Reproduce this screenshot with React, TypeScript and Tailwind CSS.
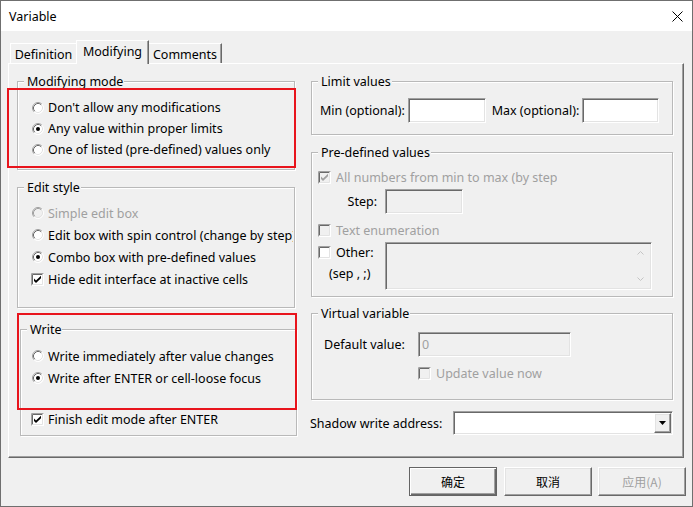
import React from "react";

const sunken =
  "border border-t-[#a0a0a0] border-l-[#a0a0a0] border-r-white border-b-white shadow-[inset_1px_1px_0_#696969,inset_-1px_-1px_0_#e3e3e3]";
const raised =
  "border border-t-white border-l-white border-r-[#696969] border-b-[#696969] shadow-[inset_-1px_-1px_0_#a0a0a0,inset_1px_1px_0_#e3e3e3]";

function RadioIcon({ checked, disabled }: { checked?: boolean; disabled?: boolean }) {
  return (
    <svg width="12" height="12" viewBox="0 0 12 12" className="shrink-0">
      <circle cx="6" cy="6" r="5.5" fill={disabled ? "#f0f0f0" : "#fff"} />
      <path d="M2.11 9.89 A5.5 5.5 0 0 1 9.89 2.11" fill="none" stroke="#a0a0a0" />
      <path d="M9.89 2.11 A5.5 5.5 0 0 1 2.11 9.89" fill="none" stroke="#fff" />
      <path d="M2.82 9.18 A4.5 4.5 0 0 1 9.18 2.82" fill="none" stroke={disabled ? "#a0a0a0" : "#696969"} />
      <path d="M9.18 2.82 A4.5 4.5 0 0 1 2.82 9.18" fill="none" stroke="#e3e3e3" />
      {checked && <circle cx="6" cy="6" r="2" fill={disabled ? "#a0a0a0" : "#000"} />}
    </svg>
  );
}

function CheckIcon({ checked, disabled }: { checked?: boolean; disabled?: boolean }) {
  return (
    <svg width="13" height="13" viewBox="0 0 13 13" className="shrink-0">
      <rect x="0" y="0" width="13" height="13" fill="#fff" />
      <rect x="2" y="2" width="9" height="9" fill={disabled ? "#f0f0f0" : "#fff"} />
      <path d="M0.5 12.5 V0.5 H12.5" fill="none" stroke="#a0a0a0" />
      <path d="M1.5 11.5 V1.5 H11.5" fill="none" stroke="#696969" />
      <path d="M1.5 11.5 H11.5 V1.5" fill="none" stroke="#e3e3e3" />
      {checked && (
        <path d="M3 5.5 L5 7.5 L10 2.8 L10 5.2 L5 10 L3 8 Z" fill={disabled ? "#a0a0a0" : "#000"} />
      )}
    </svg>
  );
}

function RadioRow({ label, checked, disabled, className = "" }: { label: string; checked?: boolean; disabled?: boolean; className?: string }) {
  return (
    <div className={"flex items-center whitespace-nowrap " + className}>
      <RadioIcon checked={checked} disabled={disabled} />
      <span className={"ml-[4px] " + (disabled ? "text-[#a0a0a0]" : "")}>{label}</span>
    </div>
  );
}

function CheckRow({ label, checked, disabled, className = "", gap = "ml-[4px]" }: { label: string; checked?: boolean; disabled?: boolean; className?: string; gap?: string }) {
  return (
    <div className={"flex items-center whitespace-nowrap " + className}>
      <CheckIcon checked={checked} disabled={disabled} />
      <span className={gap + " " + (disabled ? "text-[#a0a0a0]" : "")}>{label}</span>
    </div>
  );
}

function Group({ title, className = "", children }: { title: string; className?: string; children: React.ReactNode }) {
  return (
    <fieldset className={"border border-[#b9b9b9] shadow-[1px_1px_0_#fff,inset_1px_1px_0_#fff] " + className}>
      <legend className="ml-[6px] pl-[3px] pr-[1px] leading-[17px] bg-[#f0f0f0]">{title}</legend>
      {children}
    </fieldset>
  );
}

export default function App() {
  return (
    <div className="w-[693px] h-[507px] border border-[#6f6f6f] bg-[#f0f0f0] flex flex-col overflow-hidden text-[12.5px] leading-[17px] text-black font-['Noto_Sans',sans-serif]">
      {/* title bar */}
      <div className="h-[30px] shrink-0 bg-white flex items-center justify-between pl-[8px] pr-[9px]">
        <span>Variable</span>
        <svg width="11" height="11" viewBox="0 0 11 11">
          <path d="M0.5 0.5 L10.5 10.5 M10.5 0.5 L0.5 10.5" stroke="#000" strokeWidth="1" />
        </svg>
      </div>

      <div className="flex-1 flex flex-col pt-[9px] pl-[7px] pr-[8px] pb-[10px]">
        {/* tabs */}
        <div className="flex items-end h-[23px] pl-[2px] shrink-0">
          <div className="w-[66px] h-[20px] pt-[2px] text-center border-t border-l border-t-white border-l-white">
            Definition
          </div>
          <div className="relative z-10 w-[73px] h-[24px] -mb-[1px] pt-[2px] text-center bg-[#f0f0f0] border-t border-l border-r border-t-white border-l-white border-r-[#696969] shadow-[inset_-1px_0_0_#a0a0a0]">
            Modifying
          </div>
          <div className="w-[73px] h-[20px] pt-[2px] text-center border-t border-r border-t-white border-r-[#696969] shadow-[inset_-1px_0_0_#a0a0a0]">
            Comments
          </div>
        </div>

        {/* panel */}
        <div className="relative h-[395px] shrink-0 flex pl-[8px] pt-[9px] border border-t-white border-l-white border-r-[#696969] border-b-[#696969] shadow-[inset_-1px_-1px_0_#a0a0a0]">
          {/* left column */}
          <div className="w-[280px] flex flex-col">
            <Group title="Modifying mode" className="w-[278px]">
              <div className="pt-[7px] pb-[9px] pl-[14px]">
                <RadioRow className="h-[21px]" label="Don't allow any modifications" />
                <RadioRow className="h-[21px]" label="Any value within proper limits" checked />
                <RadioRow className="h-[21px]" label="One of listed (pre-defined) values only" />
              </div>
            </Group>

            <Group title="Edit style" className="w-[278px] mt-[9px]">
              <div className="pt-[6px] pb-[17px] pl-[14px]">
                <RadioRow className="h-[22px]" label="Simple edit box" disabled />
                <div className="flex items-center h-[22px] whitespace-nowrap">
                  <RadioIcon />
                  <span className="ml-[4px] w-[245px] overflow-hidden">Edit box with spin control (change by step)</span>
                </div>
                <RadioRow className="h-[22px]" label="Combo box with pre-defined values" checked />
                <CheckRow className="h-[22px] -ml-px" label="Hide edit interface at inactive cells" checked />
              </div>
            </Group>

            <Group title="Write" className="w-[277px] ml-[3px] mt-[13px]">
              <div className="pt-[7px] pb-[5px] pl-[11px]">
                <RadioRow className="h-[22px]" label="Write immediately after value changes" />
                <RadioRow className="h-[22px]" label="Write after ENTER or cell-loose focus" checked />
                <CheckRow className="h-[22px] mt-[19px] -ml-px" label="Finish edit mode after ENTER" checked />
              </div>
            </Group>
          </div>

          {/* right column */}
          <div className="w-[362px] ml-[14px] flex flex-col">
            <Group title="Limit values">
              <div className="pt-[8px] pb-[11px] pl-[8px] pr-[13px]">
                <div className="flex items-center h-[25px]">
                  <span className="whitespace-nowrap">Min (optional):</span>
                  <div className={"ml-auto w-[78px] h-[25px] bg-white " + sunken} />
                  <span className="ml-[6px] whitespace-nowrap">Max (optional):</span>
                  <div className={"ml-auto w-[77px] h-[25px] bg-white " + sunken} />
                </div>
              </div>
            </Group>

            <Group title="Pre-defined values" className="mt-[9px]">
              <div className="pt-[6px] pb-[6px] pl-[6px]">
                <div className="flex items-center h-[20px] whitespace-nowrap">
                  <CheckIcon checked disabled />
                  <span className="ml-[5px] w-[221px] overflow-hidden text-[#a0a0a0]">All numbers from min to max (by step)</span>
                </div>
                <div className="flex items-center h-[25px] mt-[2px]">
                  <span className="w-[67px] text-right pr-[8px]">Step:</span>
                  <div className={"w-[78px] h-[25px] bg-[#f0f0f0] " + sunken} />
                </div>
                <CheckRow className="h-[20px] mt-[6px]" gap="ml-[5px]" label="Text enumeration" disabled />
                <div className="flex mt-[2px]">
                  <div className="w-[67px] flex flex-col">
                    <CheckRow className="h-[20px]" gap="ml-[5px]" label="Other:" />
                    <span className="mt-[2px] ml-[11px] leading-[20px] whitespace-nowrap">(sep , ;)</span>
                  </div>
                  <div className={"w-[267px] h-[48px] bg-[#f0f0f0] flex justify-end p-[2px] " + sunken}>
                    <div className="w-[17px] h-full flex flex-col justify-between items-center py-[6px]">
                      <svg width="7" height="4" viewBox="0 0 7 4">
                        <path d="M0.5 3.5 L3.5 0.5 L6.5 3.5" fill="none" stroke="#c4c4c4" />
                      </svg>
                      <svg width="7" height="4" viewBox="0 0 7 4">
                        <path d="M0.5 0.5 L3.5 3.5 L6.5 0.5" fill="none" stroke="#c4c4c4" />
                      </svg>
                    </div>
                  </div>
                </div>
              </div>
            </Group>

            <Group title="Virtual variable" className="mt-[8px]">
              <div className="pt-[10px] pb-[16px]">
                <div className="flex items-center h-[25px]">
                  <span className="w-[106px] pl-[12px] whitespace-nowrap">Default value:</span>
                  <div className={"w-[153px] h-[25px] bg-[#f0f0f0] pl-[3px] flex items-center text-[#a0a0a0] " + sunken}>0</div>
                </div>
                <CheckRow className="h-[20px] mt-[6px] ml-[106px]" gap="ml-[5px]" label="Update value now" disabled />
              </div>
            </Group>

            <div className="flex items-center justify-between mt-[11px] h-[24px] -ml-px">
              <span className="whitespace-nowrap">Shadow write address:</span>
              <div className={"w-[220px] h-[24px] bg-white flex justify-end p-[1px] " + sunken}>
                <div className={"w-[17px] h-full bg-[#f0f0f0] flex items-center justify-center " + raised}>
                  <svg width="7" height="4" viewBox="0 0 7 4">
                    <path d="M0 0 H7 L3.5 4 Z" fill="#000" />
                  </svg>
                </div>
              </div>
            </div>
          </div>

          {/* annotation frames */}
          <div className="absolute left-[-2px] top-[24px] w-[289px] h-[80px] border-2 border-[#e8141c] pointer-events-none" />
          <div className="absolute left-[8px] top-[249px] w-[280px] h-[97px] border-2 border-[#e8141c] pointer-events-none" />
        </div>

        {/* buttons */}
        <div className="flex justify-end mt-[9px] h-[29px] -mr-[2px] text-[12px] font-['Noto_Sans_CJK_SC',sans-serif]">
          <button className="w-[88px] h-[29px] bg-[#f0f0f0] border border-[#646464] shadow-[inset_1px_1px_0_#fff,inset_-1px_-1px_0_#696969,inset_-2px_-2px_0_#a0a0a0]">
            确定
          </button>
          <button className={"ml-[7px] w-[88px] h-[29px] bg-[#f0f0f0] " + raised}>取消</button>
          <button className={"ml-[6px] w-[88px] h-[29px] bg-[#f0f0f0] text-[#a0a0a0] " + raised}>应用(A)</button>
        </div>
      </div>
    </div>
  );
}
